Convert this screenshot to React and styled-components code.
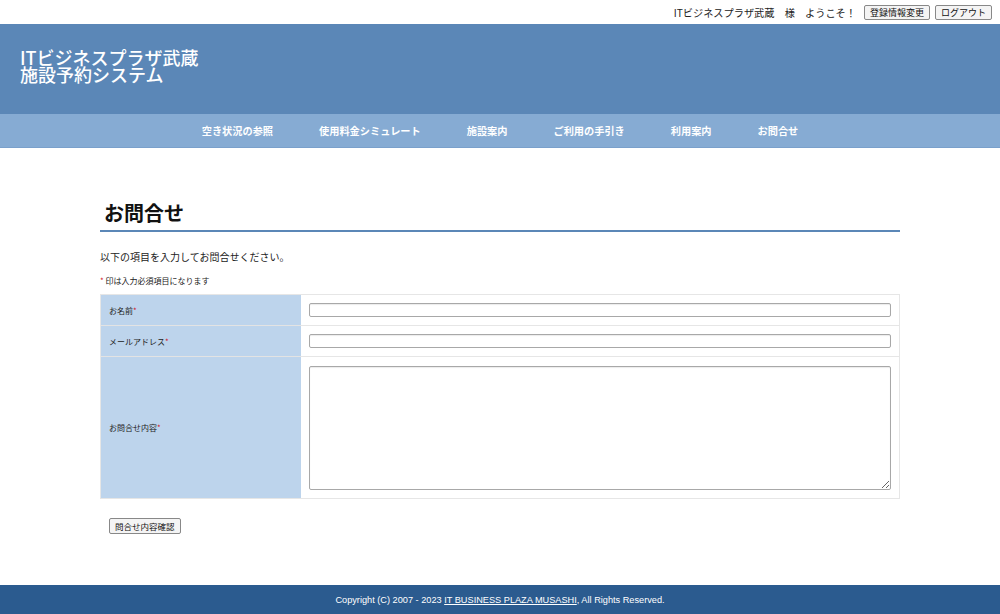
import styled, { createGlobalStyle } from "styled-components"

const Global = createGlobalStyle`
  html, body { margin: 0; padding: 0; background: #fff; }
  body {
    font-family: "Liberation Sans", "Noto Sans CJK JP", sans-serif;
    color: #222;
  }
  * { box-sizing: border-box; }
`

const Page = styled.div`
  width: 1000px;
  height: 614px;
  display: flex;
  flex-direction: column;
`

const TopBar = styled.div`
  height: 24px;
  display: flex;
  justify-content: flex-end;
  align-items: center;
  gap: 5px;
  padding-right: 8px;
  font-size: 10.2px;
`
const Welcome = styled.span`
  margin-right: 3px;
  font-family: "Noto Sans CJK JP", sans-serif;
  white-space: pre;
`
const SmallBtn = styled.button`
  font-family: "Noto Sans CJK JP", sans-serif;
  font-size: 9px;
  height: 15px;
  padding: 0 5px;
  line-height: 13px;
  background: #f4f4f4;
  border: 1px solid #888;
  border-radius: 2px;
  color: #111;
`

const Header = styled.header`
  height: 90px;
  background: #5b87b7;
  padding: 25px 20px 0;
`
const SiteTitle = styled.h1`
  margin: 0;
  color: #fff;
  font-family: "Noto Sans CJK JP", sans-serif;
  font-weight: 500;
  font-size: 18px;
  line-height: 17px;
`
const TitleLine = styled.span`
  display: block;
  height: 17px;
  overflow: visible;
`

const Nav = styled.nav`
  height: 34px;
  background: #86abd3;
  border-bottom: 1px solid #7aa0cb;
  display: flex;
  justify-content: center;
  align-items: center;
`
const NavItem = styled.a`
  color: #fff;
  font-family: "Noto Sans CJK JP", sans-serif;
  font-weight: 700;
  font-size: 10.2px;
  padding: 0 23px;
`

const Main = styled.main`
  flex: 1;
  width: 800px;
  margin: 0 auto;
  padding-top: 52px;
  font-family: "Noto Sans CJK JP", sans-serif;
`
const Heading = styled.h2`
  margin: 0;
  padding: 0 0 4px 4px;
  font-size: 20px;
  font-weight: 700;
  line-height: 26px;
  color: #111;
  border-bottom: 2px solid #5b87b7;
`
const Lead = styled.p`
  margin: 18px 0 0 0;
  font-size: 10px;
  line-height: 14px;
`
const Note = styled.p`
  margin: 11px 0 0 0;
  font-size: 8px;
  line-height: 12px;
`
const Req = styled.span`
  color: #d0202a;
`

const Table = styled.div`
  margin-top: 7px;
  display: grid;
  grid-template-columns: 200px 1fr;
  border: 1px solid #e6e6e6;
`
const Label = styled.div`
  background: #bdd4ec;
  height: ${p => p.$h}px;
  border-bottom: ${p => (p.$last ? "none" : "1px solid #e3e3e3")};
  display: flex;
  align-items: center;
  padding-left: 8px;
  font-size: 8px;
  color: #222;
`
const Cell = styled.div`
  height: ${p => p.$h}px;
  border-bottom: ${p => (p.$last ? "none" : "1px solid #e6e6e6")};
  display: flex;
  align-items: center;
  padding: 0 8px;
`
const Input = styled.input`
  width: 100%;
  height: 14px;
  border: 1px solid #a8a8a8;
  border-radius: 2px;
  box-shadow: inset 0 1px 1px rgba(0,0,0,0.08);
  background: #fff;
`
const TextArea = styled.textarea`
  width: 100%;
  height: 124px;
  border: 1px solid #a8a8a8;
  border-radius: 2px;
  box-shadow: inset 0 1px 1px rgba(0,0,0,0.08);
  resize: vertical;
`
const Submit = styled.button`
  margin: 19px 0 0 9px;
  font-family: "Noto Sans CJK JP", sans-serif;
  font-size: 8.5px;
  height: 16px;
  padding: 0 5px;
  background: #f4f4f4;
  border: 1px solid #888;
  border-radius: 2px;
  color: #111;
`

const Footer = styled.footer`
  height: 29px;
  background: #2b5b8f;
  color: #fff;
  font-size: 9.2px;
  display: flex;
  align-items: center;
  justify-content: center;
  a { color: #fff; text-decoration: underline; }
`

const navItems = [
  "空き状況の参照",
  "使用料金シミュレート",
  "施設案内",
  "ご利用の手引き",
  "利用案内",
  "お問合せ",
]

export default function App() {
  return (
    <Page>
      <Global />
      <TopBar>
        <Welcome>ITビジネスプラザ武蔵　様　ようこそ！</Welcome>
        <SmallBtn>登録情報変更</SmallBtn>
        <SmallBtn>ログアウト</SmallBtn>
      </TopBar>
      <Header>
        <SiteTitle>
          <TitleLine>ITビジネスプラザ武蔵</TitleLine>
          <TitleLine>施設予約システム</TitleLine>
        </SiteTitle>
      </Header>
      <Nav>
        {navItems.map(t => (
          <NavItem key={t}>{t}</NavItem>
        ))}
      </Nav>
      <Main>
        <Heading>お問合せ</Heading>
        <Lead>以下の項目を入力してお問合せください。</Lead>
        <Note><Req>*</Req> 印は入力必須項目になります</Note>
        <Table>
          <Label $h={31}>お名前<Req>*</Req></Label>
          <Cell $h={31}><Input /></Cell>
          <Label $h={31}>メールアドレス<Req>*</Req></Label>
          <Cell $h={31}><Input /></Cell>
          <Label $h={141} $last>お問合せ内容<Req>*</Req></Label>
          <Cell $h={141} $last><TextArea /></Cell>
        </Table>
        <Submit>問合せ内容確認</Submit>
      </Main>
      <Footer>
        Copyright (C) 2007 - 2023&nbsp;<a>IT BUSINESS PLAZA MUSASHI</a>, All Rights Reserved.
      </Footer>
    </Page>
  )
}
